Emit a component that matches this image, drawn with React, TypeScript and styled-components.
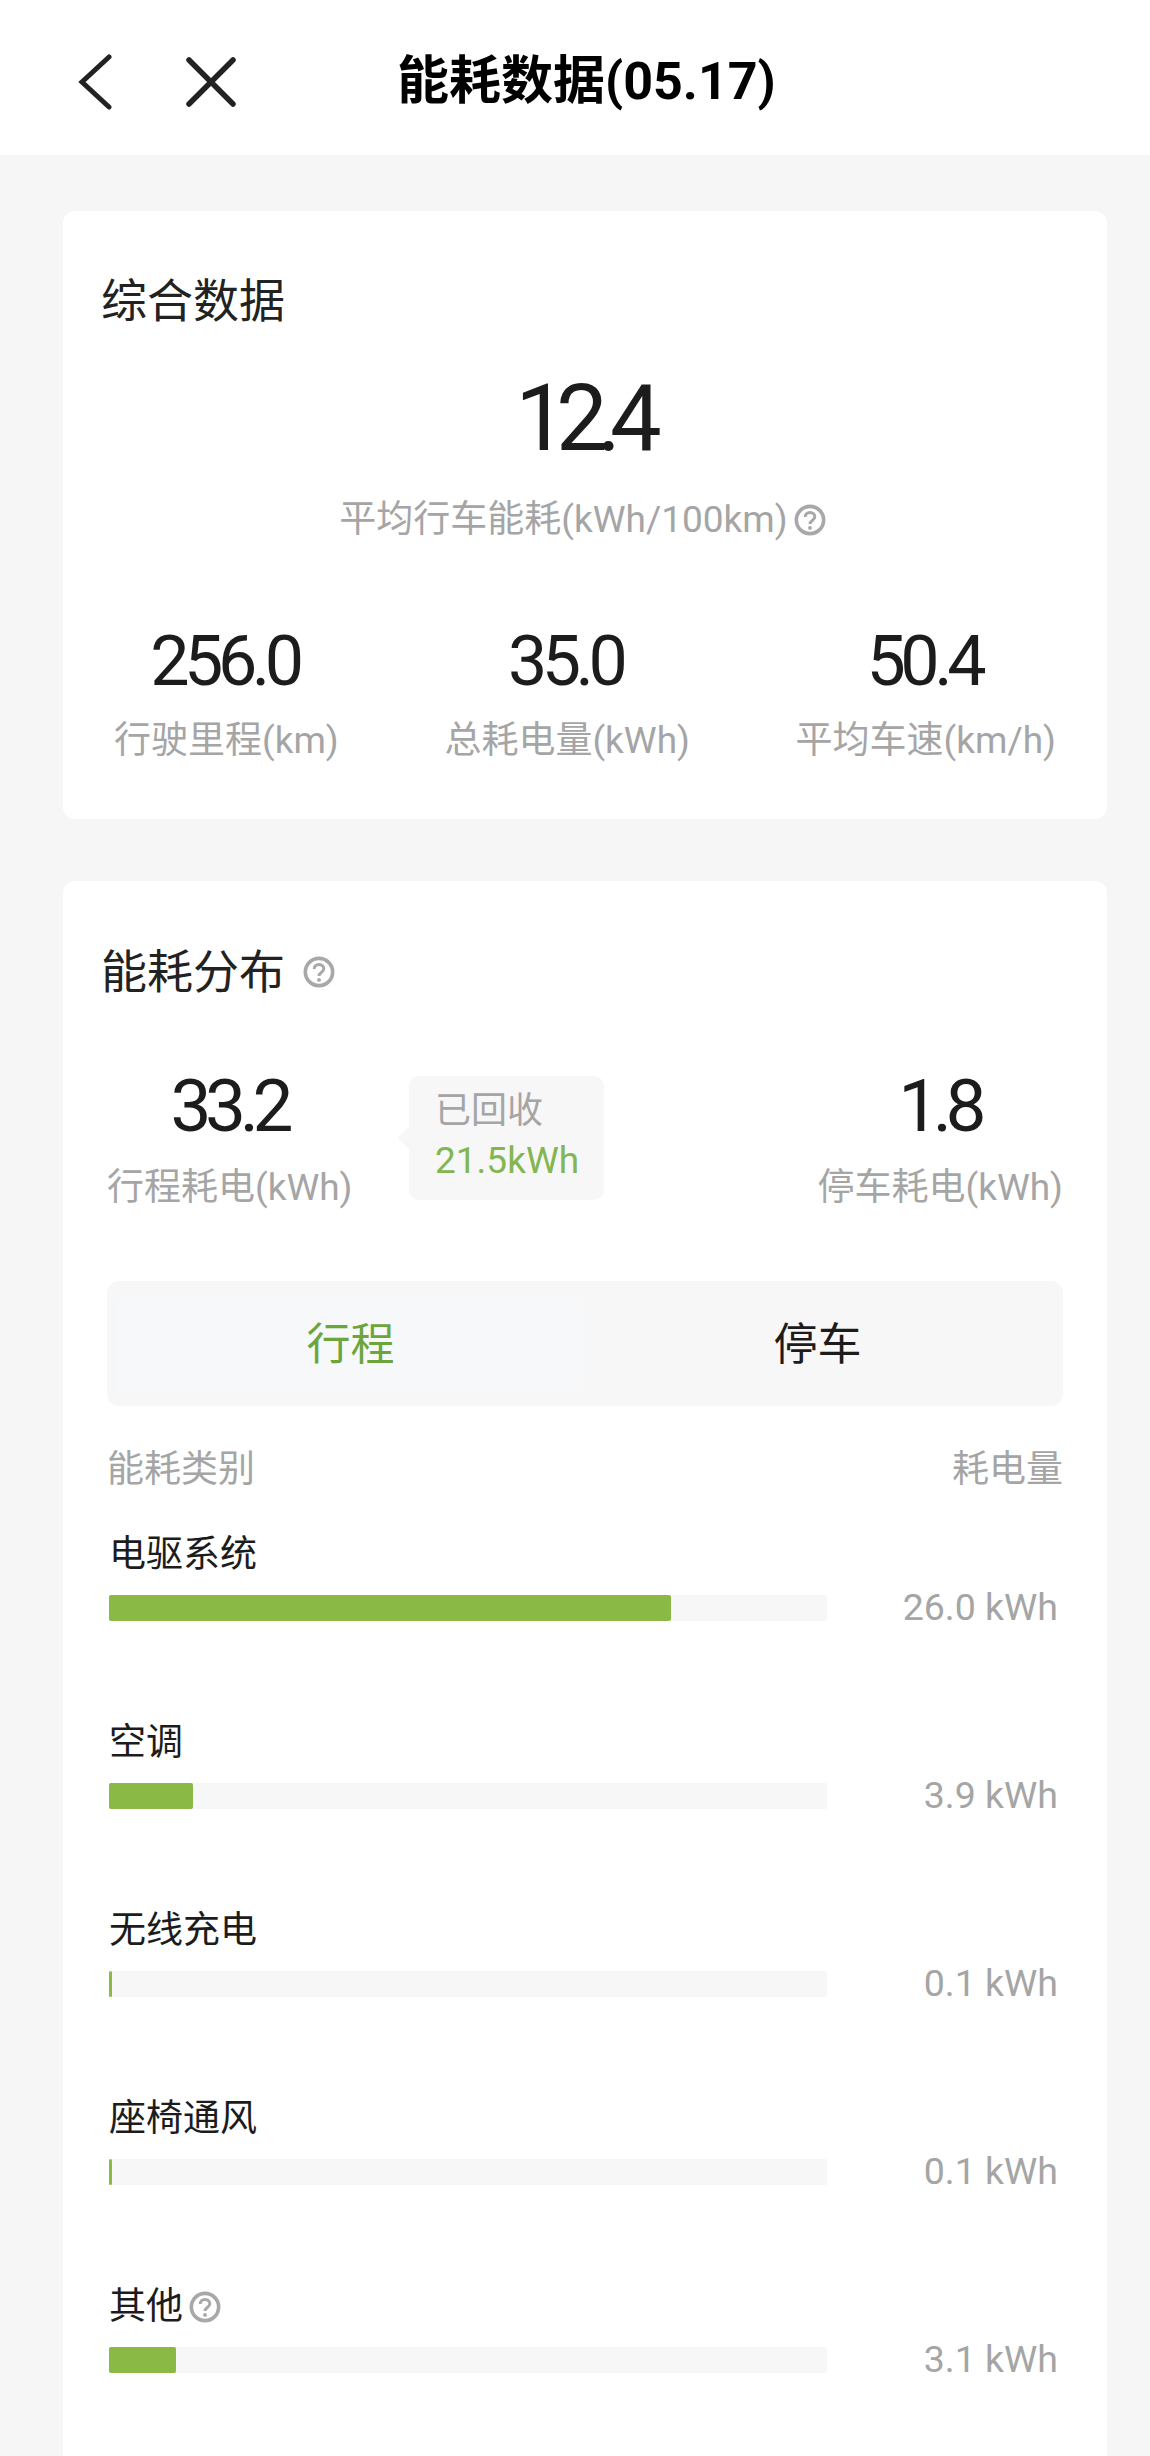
import React from 'react';
import styled, { createGlobalStyle } from 'styled-components';

const GlobalStyle = createGlobalStyle`
  html, body {
    margin: 0;
    padding: 0;
    background: #f6f6f6;
  }
  body {
    font-family: Roboto, "Noto Sans CJK SC", sans-serif;
    color: #1c1c1c;
  }
`;

const rows = [
  { key: 'drive', label: '电驱系统', value: '26.0 kWh', width: 562, help: false },
  { key: 'ac', label: '空调', value: '3.9 kWh', width: 84, help: false },
  { key: 'wireless', label: '无线充电', value: '0.1 kWh', width: 3, help: false },
  { key: 'seat', label: '座椅通风', value: '0.1 kWh', width: 3, help: false },
  { key: 'other', label: '其他', value: '3.1 kWh', width: 67, help: true },
];

const HelpIcon: React.FC = () => (
  <HelpSvg viewBox="0 0 30 30" fill="none" stroke="#a8a8a8">
    <circle cx="15" cy="15" r="12.8" strokeWidth="3.4" />
    <path d="M10.5 12.2c0-2.6 2-4.2 4.5-4.2s4.5 1.6 4.5 4c0 3.4-4.5 3.6-4.5 6.8" strokeWidth="2.8" />
    <circle cx="15" cy="22.4" r="1.8" fill="#a8a8a8" stroke="none" />
  </HelpSvg>
);

const App: React.FC = () => {
  return (
    <Page>
      <GlobalStyle />
      <Header>
        <IconGroup>
          <svg width="36" height="56" viewBox="0 0 36 56" fill="none" stroke="#222" strokeWidth="5" strokeLinecap="round" strokeLinejoin="miter">
            <path d="M32 3 L5 28 L32 53" />
          </svg>
          <svg width="52" height="52" viewBox="0 0 52 52" fill="none" stroke="#222" strokeWidth="5.5" strokeLinecap="round">
            <path d="M4 4 L48 48 M48 4 L4 48" />
          </svg>
        </IconGroup>
        <Title>能耗数据(05.17)</Title>
      </Header>

      <Content>
        <SummaryCard>
          <CardTitle>综合数据</CardTitle>
          <Headline>
            <BigNumber>12.4</BigNumber>
            <HeadlineLabel>
              平均行车能耗(kWh/100km)
              <HelpIcon />
            </HeadlineLabel>
          </Headline>
          <StatRow>
            <Stat>
              <StatValue>256.0</StatValue>
              <StatLabel>行驶里程(km)</StatLabel>
            </Stat>
            <Stat>
              <StatValue>35.0</StatValue>
              <StatLabel>总耗电量(kWh)</StatLabel>
            </Stat>
            <Stat>
              <StatValue>50.4</StatValue>
              <StatLabel>平均车速(km/h)</StatLabel>
            </Stat>
          </StatRow>
        </SummaryCard>

        <DistributionCard>
          <CardTitle>
            能耗分布
            <TitleHelp>
              <HelpIcon />
            </TitleHelp>
          </CardTitle>

          <SplitRow>
            <Stat>
              <SplitValue>33.2</SplitValue>
              <StatLabel>行程耗电(kWh)</StatLabel>
            </Stat>
            <Recovered>
              <RecoveredLabel>已回收</RecoveredLabel>
              <RecoveredValue>21.5kWh</RecoveredValue>
            </Recovered>
            <Stat>
              <SplitValue>1.8</SplitValue>
              <StatLabel>停车耗电(kWh)</StatLabel>
            </Stat>
          </SplitRow>

          <Tabs>
            <TabItem $active>行程</TabItem>
            <TabItem>停车</TabItem>
          </Tabs>

          <TableHead>
            <span>能耗类别</span>
            <span>耗电量</span>
          </TableHead>

          {rows.map((row) => (
            <UsageRow key={row.key}>
              <UsageLabel>
                {row.label}
                {row.help && <HelpIcon />}
              </UsageLabel>
              <UsageBody>
                <Track>
                  <Fill $width={row.width} />
                </Track>
                <UsageValue>{row.value}</UsageValue>
              </UsageBody>
            </UsageRow>
          ))}
        </DistributionCard>
      </Content>
    </Page>
  );
};

const Page = styled.div`
  width: 1150px;
  height: 2456px;
  overflow: hidden;
  background: #f6f6f6;
`;

const Header = styled.header`
  height: 155px;
  box-sizing: border-box;
  padding: 8px 0 0 77px;
  background: #fff;
  display: flex;
  align-items: center;
`;

const IconGroup = styled.div`
  display: flex;
  align-items: center;
  gap: 72px;
  width: 320px;
`;

const Title = styled.h1`
  margin: 0;
  font-size: 52px;
  line-height: 60px;
  font-weight: 700;
  color: #000;
`;

const Content = styled.main`
  padding: 56px 43px 0 63px;
  display: flex;
  flex-direction: column;
  gap: 62px;
`;

const Card = styled.section`
  background: #fff;
  border-radius: 12px;
`;

const SummaryCard = styled(Card)`
  height: 608px;
  padding: 60px 0 0;
  box-sizing: border-box;
`;

const DistributionCard = styled(Card)`
  padding: 61px 0 0;
  height: 1600px;
`;

const CardTitle = styled.h2`
  margin: 0 0 0 38px;
  font-size: 46px;
  line-height: 60px;
  font-weight: 400;
  color: #222;
  display: flex;
  align-items: center;
`;

const TitleHelp = styled.span`
  display: flex;
  margin-left: 12px;
`;

const HelpSvg = styled.svg`
  width: 32px;
  height: 32px;
  flex: none;
  margin-left: 6px;
`;

const Headline = styled.div`
  margin-top: 33px;
  display: flex;
  flex-direction: column;
  align-items: center;
`;

const BigNumber = styled.div`
  font-size: 92px;
  line-height: 110px;
  font-weight: 400;
  letter-spacing: -11px;
  margin-left: -4px;
`;

const HeadlineLabel = styled.div`
  margin-top: 22px;
  font-size: 37px;
  line-height: 48px;
  color: #a5a5a5;
  display: flex;
  align-items: center;
  margin-left: -5px;
`;

const StatRow = styled.div`
  margin-top: 77px;
  padding: 0 51px;
  display: flex;
  justify-content: space-between;
`;

const Stat = styled.div`
  display: flex;
  flex-direction: column;
  align-items: center;
`;

const StatValue = styled.div`
  font-size: 70px;
  line-height: 80px;
  font-weight: 400;
  letter-spacing: -5.5px;
  margin-left: -4px;
`;

const StatLabel = styled.div`
  margin-top: 16px;
  font-size: 37px;
  line-height: 48px;
  color: #a5a5a5;
  white-space: nowrap;
`;

const SplitRow = styled.div`
  margin-top: 62px;
  padding: 0 44px 0 44px;
  display: flex;
  align-items: flex-start;
  justify-content: space-between;
`;

const SplitValue = styled(StatValue)`
  font-size: 73px;
  line-height: 84px;
  letter-spacing: -6.5px;
  margin-left: -2px;
`;

const Recovered = styled.div`
  position: relative;
  width: 195px;
  height: 124px;
  box-sizing: border-box;
  margin: 12px 0 0 -157px;
  padding: 10px 0 0 26px;
  background: #f7f7f7;
  border-radius: 10px;

  &::before {
    content: '';
    position: absolute;
    left: -8px;
    top: 54px;
    width: 16px;
    height: 16px;
    background: #f7f7f7;
    transform: rotate(45deg);
    border-radius: 2px;
  }
`;

const RecoveredLabel = styled.div`
  font-size: 36px;
  line-height: 50px;
  color: #a5a5a5;
`;

const RecoveredValue = styled.div`
  font-size: 37px;
  line-height: 50px;
  color: #83b550;
`;

const Tabs = styled.div`
  margin: 69px 44px 0;
  height: 125px;
  box-sizing: border-box;
  padding: 14px 12px 12px 10px;
  display: grid;
  grid-template-columns: 1fr 1fr;
  background: #f7f7f7;
  border-radius: 12px;
`;

const TabItem = styled.div<{ $active?: boolean }>`
  display: flex;
  align-items: center;
  justify-content: center;
  font-size: 44px;
  line-height: 56px;
  border-radius: 8px;
  background: ${({ $active }) => ($active ? '#f7f8f9' : 'transparent')};
  color: ${({ $active }) => ($active ? '#6ca53c' : '#1c1c1c')};
`;

const TableHead = styled.div`
  margin: 41px 44px 0;
  display: flex;
  justify-content: space-between;
  font-size: 37px;
  line-height: 46px;
  color: #a5a5a5;
`;

const UsageRow = styled.div`
  margin: 39px 49px 0 46px;
  height: 149px;

  & + & {
    margin-top: 39px;
  }
`;

const UsageLabel = styled.div`
  font-size: 37px;
  line-height: 46px;
  color: #1c1c1c;
  display: flex;
  align-items: center;
`;

const UsageBody = styled.div`
  margin-top: 8px;
  display: flex;
  align-items: center;
  justify-content: space-between;
`;

const Track = styled.div`
  width: 718px;
  height: 26px;
  background: #f7f7f7;
  border-radius: 2px;
`;

const Fill = styled.div<{ $width: number }>`
  width: ${({ $width }) => $width}px;
  height: 100%;
  background: #8ab945;
  border-radius: 2px;
`;

const UsageValue = styled.div`
  font-size: 37.5px;
  line-height: 46px;
  margin-top: -2px;
  color: #a5a5a5;
`;

export default App;
